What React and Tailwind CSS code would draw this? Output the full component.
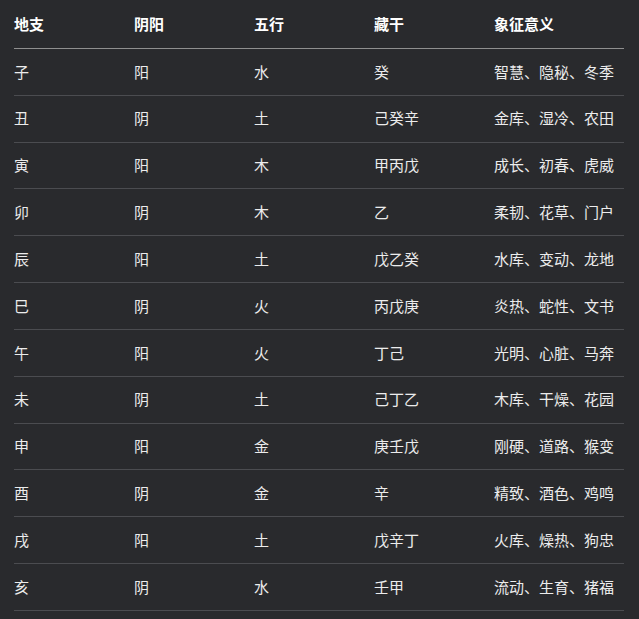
import React from 'react';

const rows = [
  ['子', '阳', '水', '癸', '智慧、隐秘、冬季'],
  ['丑', '阴', '土', '己癸辛', '金库、湿冷、农田'],
  ['寅', '阳', '木', '甲丙戊', '成长、初春、虎威'],
  ['卯', '阴', '木', '乙', '柔韧、花草、门户'],
  ['辰', '阳', '土', '戊乙癸', '水库、变动、龙地'],
  ['巳', '阴', '火', '丙戊庚', '炎热、蛇性、文书'],
  ['午', '阳', '火', '丁己', '光明、心脏、马奔'],
  ['未', '阴', '土', '己丁乙', '木库、干燥、花园'],
  ['申', '阳', '金', '庚壬戊', '刚硬、道路、猴变'],
  ['酉', '阴', '金', '辛', '精致、酒色、鸡鸣'],
  ['戌', '阳', '土', '戊辛丁', '火库、燥热、狗忠'],
  ['亥', '阴', '水', '壬甲', '流动、生育、猪福'],
];

const cols = ['w-[120px]', 'w-[120px]', 'w-[120px]', 'w-[120px]', 'w-[130px]'];

export default function App() {
  return (
    <div
      className="min-h-screen bg-[#292a2d] text-[#ececec] text-[15px]"
      style={{ fontFamily: '"Noto Sans CJK SC", "Noto Sans", sans-serif' }}
    >
      <div className="ml-[14px] w-[610px]">
        {/* header */}
        <div className="flex items-center h-[49px] border-b border-[#8f8f8f] font-bold text-white">
          {['地支', '阴阳', '五行', '藏干', '象征意义'].map((h, i) => (
            <div key={h} className={cols[i]}>{h}</div>
          ))}
        </div>
        {rows.map((r) => (
          <div key={r[0]} className="flex items-center h-[46.83px] border-b border-[#4b4c50]">
            {r.map((c, i) => (
              <div key={i} className={cols[i]}>{c}</div>
            ))}
          </div>
        ))}
      </div>
    </div>
  );
}
